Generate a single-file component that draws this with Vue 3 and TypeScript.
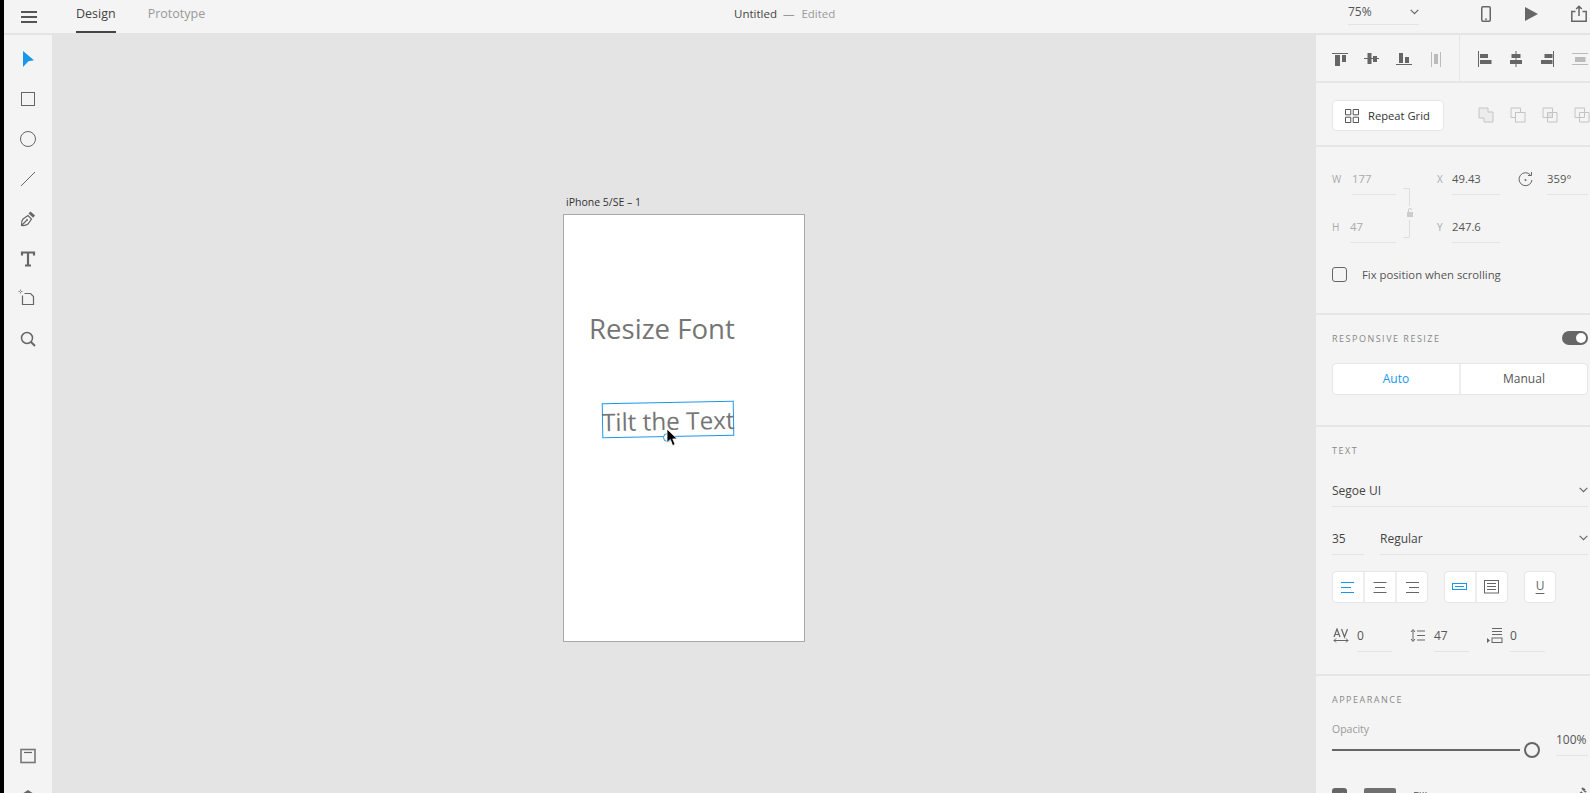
<template>
  <div class="app">
    <div class="strip" />
    <div class="main">
      <header class="topbar">
        <div class="top-left">
          <svg class="burger" width="16" height="12" viewBox="0 0 16 12"><path d="M0 1h16M0 6h16M0 11h16" stroke="#555" stroke-width="2" /></svg>
          <span class="tab active">Design</span>
          <span class="tab">Prototype</span>
        </div>
        <div class="doc-title"><span class="doc-name">Untitled</span><span class="doc-dash">—</span><span class="doc-state">Edited</span></div>
        <div class="top-right">
          <div class="zoom-box">
            <span>75%</span>
            <svg width="9" height="6" viewBox="0 0 9 6"><path d="M.7.8l3.800 3.800L8.300.8" fill="none" stroke="#666" stroke-width="1.200" /></svg>
          </div>
          <svg class="phone" width="10" height="16" viewBox="0 0 10 16"><rect x=".75" y=".75" width="8.500" height="14.500" rx="1.200" fill="none" stroke="#666" stroke-width="1.500" /><path d="M4 13.200h2" stroke="#666" stroke-width="1.300" /></svg>
          <svg class="play" width="13" height="14" viewBox="0 0 13 14"><path d="M0 0l13 7L0 14z" fill="#666" /></svg>
          <svg class="share" width="16" height="17" viewBox="0 0 16 17"><path d="M4.500 6.500H.8v9.700h14.400V6.500h-3.700M8 11V1.500M5.200 4L8 1.200 10.800 4" fill="none" stroke="#666" stroke-width="1.500" /></svg>
        </div>
      </header>

      <div class="body">
        <aside class="tools">
          <div class="tool"><svg width="20" height="20" viewBox="0 0 20 20"><path d="M5 2l11 9.200-5.500 1L5 18z" fill="#1b97ea" /></svg></div>
          <div class="tool"><svg width="20" height="20" viewBox="0 0 20 20"><rect x="3.500" y="3.500" width="13" height="13" fill="none" stroke="#666" /></svg></div>
          <div class="tool"><svg width="20" height="20" viewBox="0 0 20 20"><circle cx="10" cy="10" r="7.500" fill="none" stroke="#666" /></svg></div>
          <div class="tool"><svg width="20" height="20" viewBox="0 0 20 20"><path d="M3 17L17 3" stroke="#666" /></svg></div>
          <div class="tool"><svg width="20" height="20" viewBox="0 0 20 20"><path d="M3.500 16.500c-.3-2.500.2-5 1.500-6.500l5-3.500 3.500 3.500-3.500 5c-1.500 1.300-4 1.800-6.500 1.500zM3.500 16.500l5-5" fill="none" stroke="#666" stroke-width="1.200" /><path d="M12.500 2.500l4.500 4-1.800 2.200L10.500 4.500z" fill="#666" /><circle cx="9" cy="11" r="1" fill="#666" /></svg></div>
          <div class="tool"><svg width="20" height="20" viewBox="0 0 20 20"><path d="M4 6.500V3.500h12v3M10 3.500v13M7 16.500h6" fill="none" stroke="#666" stroke-width="2.200" /></svg></div>
          <div class="tool"><svg width="20" height="20" viewBox="0 0 20 20"><path d="M4.500 6.500v9h11V7.500l-3-3H6.500" fill="none" stroke="#666" stroke-width="1.200" /><path d="M.5 2.500h4M2.500.5v4" stroke="#888" stroke-dasharray="1.500 1" /></svg></div>
          <div class="tool"><svg width="20" height="20" viewBox="0 0 20 20"><circle cx="9" cy="9" r="5.500" fill="none" stroke="#666" stroke-width="1.500" /><path d="M13 13l4 4" stroke="#666" stroke-width="2" /></svg></div>
          <div class="tools-bottom">
            <div class="tool"><svg width="20" height="20" viewBox="0 0 20 20"><rect x="3" y="3.500" width="14" height="13" fill="none" stroke="#777" stroke-width="1.600" /><path d="M6 6.500h8" stroke="#666" stroke-width="1.200" /></svg></div>
            <div class="tool"><svg width="20" height="20" viewBox="0 0 20 20"><path d="M10 4l6 4-6 4-6-4zM4 12l6 4 6-4" fill="#666" /></svg></div>
          </div>
        </aside>

        <main class="canvas">
          <div class="artboard-label">iPhone 5/SE – 1</div>
          <div class="artboard">
            <div class="resize-text">Resize Font</div>
            <div class="tilt-box"><span>Tilt the Text</span></div>
            <div class="handle" />
            <svg class="cursor" width="13" height="19" viewBox="0 0 13 19"><path d="M1 1v13.500l3.300-3 2.300 6 2.500-1-2.300-5.600h4.500z" fill="#000" stroke="#fff" stroke-width=".8" /></svg>
          </div>
        </main>

        <aside class="panel">
          <section class="sec align-sec">
            <div class="align-group first">
              <div class="cell"><svg width="20" height="20" viewBox="0 0 20 20"><path d="M2 5.500h16" stroke="#666" /><path d="M5 7h5v11H5zM12 7h4v7h-4z" fill="#666" /></svg></div>
              <div class="cell"><svg width="20" height="20" viewBox="0 0 20 20"><path d="M2 10.500h15" stroke="#666" /><path d="M5.500 5h4v11h-4zM11 8h4v6h-4z" fill="#666" /></svg></div>
              <div class="cell"><svg width="20" height="20" viewBox="0 0 20 20"><path d="M2 16.500h16" stroke="#666" /><path d="M5 5h4v10H5zM11 9h4v6h-4z" fill="#666" /></svg></div>
              <div class="cell"><svg width="20" height="20" viewBox="0 0 20 20"><path d="M5.500 4v15M14.500 4v15" stroke="#bbb" /><path d="M8 6h4v10H8z" fill="#bbb" /></svg></div>
            </div>
            <div class="align-group">
              <div class="cell"><svg width="20" height="20" viewBox="0 0 20 20"><path d="M4.500 3v16" stroke="#666" /><path d="M6 6h8v4H6zM6 12h11.500v4H6z" fill="#666" /></svg></div>
              <div class="cell"><svg width="20" height="20" viewBox="0 0 20 20"><path d="M10 3v16" stroke="#666" /><path d="M5.500 6h9v4h-9zM4 12h12v4H4z" fill="#666" /></svg></div>
              <div class="cell"><svg width="20" height="20" viewBox="0 0 20 20"><path d="M15.500 3v16" stroke="#666" /><path d="M6.500 6h8v4h-8zM3 12h11.500v4H3z" fill="#666" /></svg></div>
              <div class="cell"><svg width="20" height="20" viewBox="0 0 20 20"><path d="M2 5.500h16M2 16.500h16" stroke="#bbb" /><path d="M5 9h10.500v5H5z" fill="#bbb" /></svg></div>
            </div>
          </section>

          <section class="sec grid-sec">
            <button class="repeat-btn">
              <svg width="14" height="14" viewBox="0 0 14 14"><path d="M.5.500h5.300v5.300H.5zM8.200.500h5.300v5.300H8.200zM.5 8.200h5.300v5.300H.5zM8.200 8.200h5.300v5.300H8.200z" fill="none" stroke="#555" /></svg>
              <span>Repeat Grid</span>
            </button>
            <div class="bools">
              <svg width="16" height="16" viewBox="0 0 16 16"><path d="M1 1h9v4h5v10H6v-4H1z" fill="#ececec" stroke="#c4c4c4" /></svg>
              <svg width="16" height="16" viewBox="0 0 16 16"><path d="M10.500 5V1H1v9.500h4.500" fill="none" stroke="#c4c4c4" /><rect x="5.500" y="5.500" width="9.500" height="9.500" fill="none" stroke="#c4c4c4" /></svg>
              <svg width="16" height="16" viewBox="0 0 16 16"><rect x="5.500" y="5.500" width="5" height="5" fill="#e4e4e4" /><path d="M1 1h9.500v9.500H1zM5.500 5.500H15V15H5.500z" fill="none" stroke="#c4c4c4" /></svg>
              <svg width="16" height="16" viewBox="0 0 16 16"><path d="M1 1h9.500v9.500H1zM5.500 5.500H15V15H5.500z" fill="none" stroke="#c4c4c4" /></svg>
            </div>
          </section>

          <section class="sec transform-sec">
            <div class="transform-grid">
              <span class="f-label">W</span>
              <span class="f-input dim">177</span>
              <svg class="bracket" width="11" height="50" viewBox="0 0 11 50"><path d="M.5.500h6v17.500M.5 49.500h6V32" fill="none" stroke="#ddd" /><path d="M4 24h6v5H4z" fill="#ccc" /><path d="M5.500 24v-2a1.500 1.500 0 013 0" fill="none" stroke="#ccc" /></svg>
              <span class="f-label">X</span>
              <span class="f-input">49.43</span>
              <svg class="rotate" width="15" height="15" viewBox="0 0 15 15"><path d="M12.500 3A6.500 6.500 0 1014 8" fill="none" stroke="#666" /><path d="M10 3.500h3.500V0" fill="none" stroke="#666" /><circle cx="7.500" cy="8" r="1" fill="#666" /></svg>
              <span class="f-input rot-input">359°</span>
              <span class="f-label h-label">H</span>
              <span class="f-input dim short">47</span>
              <span class="f-label y-label">Y</span>
              <span class="f-input y-input">247.6</span>
            </div>
            <label class="check-row">
              <span class="checkbox" />
              <span>Fix position when scrolling</span>
            </label>
          </section>

          <section class="sec resize-sec">
            <div class="sec-head">
              <span class="sec-title">RESPONSIVE RESIZE</span>
              <span class="toggle"><i /></span>
            </div>
            <div class="segment">
              <span class="seg on">Auto</span>
              <span class="seg">Manual</span>
            </div>
          </section>

          <section class="sec text-sec">
            <div class="sec-title text-title">TEXT</div>
            <div class="select full">
              <span>Segoe UI</span>
              <svg width="9" height="6" viewBox="0 0 9 6"><path d="M.7.8l3.800 3.800L8.300.8" fill="none" stroke="#666" stroke-width="1.200" /></svg>
            </div>
            <div class="font-row">
              <div class="select size">35</div>
              <div class="select weight">
                <span>Regular</span>
                <svg width="9" height="6" viewBox="0 0 9 6"><path d="M.7.8l3.800 3.800L8.300.8" fill="none" stroke="#666" stroke-width="1.200" /></svg>
              </div>
            </div>
            <div class="btn-row">
              <div class="btn-group w3">
                <span class="tbtn"><svg width="14" height="11" viewBox="0 0 14 11"><path d="M0 .5h13M0 5.500h10M0 10.500h13" stroke="#1b97ea" /></svg></span>
                <span class="tbtn"><svg width="14" height="11" viewBox="0 0 14 11"><path d="M.5 .5h13M2 5.500h10M.5 10.500h13" stroke="#666" /></svg></span>
                <span class="tbtn"><svg width="14" height="11" viewBox="0 0 14 11"><path d="M1 .5h13M4 5.500h10M1 10.500h13" stroke="#666" /></svg></span>
              </div>
              <div class="btn-group w2">
                <span class="tbtn"><svg width="16" height="8" viewBox="0 0 16 8"><rect x=".5" y=".5" width="14" height="6" fill="none" stroke="#1b97ea" /><path d="M3 3.500h9" stroke="#1b97ea" /></svg></span>
                <span class="tbtn"><svg width="16" height="14" viewBox="0 0 16 14"><rect x=".5" y=".5" width="14" height="12.500" fill="none" stroke="#666" /><path d="M3 3.500h9M3 6.500h9M3 9.500h9" stroke="#666" /></svg></span>
              </div>
              <div class="btn-group w1">
                <span class="tbtn u-btn">U</span>
              </div>
            </div>
            <div class="metric-row">
              <div class="metric">
                <span class="av"><svg width="16" height="15" viewBox="0 0 16 15"><path d="M1 12.500h14M3 10.500l-2 2 2 2M13 10.500l2 2-2 2" fill="none" stroke="#666" /><path d="M1 9l3-8 3 8M2 6.500h4M8.500 1l3 8 3-8" fill="none" stroke="#666" stroke-width="1.200" /></svg></span>
                <span class="m-input">0</span>
              </div>
              <div class="metric line">
                <span class="av"><svg width="16" height="15" viewBox="0 0 16 15"><path d="M3 2v11M1 4l2-2.500L5 4M1 11l2 2.500L5 11M7 3h8M7 7.500h8M7 12h8" fill="none" stroke="#666" /></svg></span>
                <span class="m-input">47</span>
              </div>
              <div class="metric para">
                <span class="av"><svg width="17" height="16" viewBox="0 0 17 16"><path d="M6 .5h10M6 3.500h10M6 6.500h10" stroke="#666" /><rect x="6" y="10" width="10" height="4.500" fill="none" stroke="#666" /><path d="M1 10l3 2.500L1 15z" fill="#666" /></svg></span>
                <span class="m-input">0</span>
              </div>
            </div>
          </section>

          <section class="sec look-sec">
            <div class="sec-title">APPEARANCE</div>
            <div class="opacity-row">
              <div class="opacity-left">
                <div class="opacity-label">Opacity</div>
                <div class="slider">
                  <span class="track" />
                  <span class="knob" />
                </div>
              </div>
              <span class="opacity-val">100%</span>
            </div>
            <div class="fill-row">
              <span class="fill-check"><svg width="15" height="15" viewBox="0 0 15 15"><path d="M3.500 8l3 3 5-6" fill="none" stroke="#fff" stroke-width="1.500" /></svg></span>
              <span class="swatch" />
              <span class="fill-label">Fill</span>
              <svg class="dropper" width="14" height="14" viewBox="0 0 14 14"><path d="M2 12l6-6M8 2l4 4M9.500 4.500L11 3" stroke="#666" stroke-width="2" /></svg>
            </div>
          </section>
        </aside>
      </div>
    </div>
  </div>
</template>

<script setup lang="ts">
// static mock of the editor, nothing here is interactive
</script>

<style>
html,
body {
  margin: 0;
  background: #e3e3e3;
  overflow: hidden;
}
</style>

<style scoped>
.app {
  display: flex;
  width: 1590px;
  height: 793px;
  overflow: hidden;
  background: #e4e4e4;
  font-family: "Open Sans", "Noto Sans", sans-serif;
  font-size: 11.3px;
  color: #444;
}

.strip {
  width: 4px;
  background: #000;
  flex: none;
}

.main {
  flex: 1;
  display: flex;
  flex-direction: column;
  min-width: 0;
}

.topbar {
  display: flex;
  height: 33px;
  background: #f4f4f4;
  margin-bottom: 2px;
  flex: none;
}

.top-left {
  width: 730px;
  display: flex;
  align-items: center;
  height: 33px;
}

.burger {
  margin-left: 17px;
  margin-right: 39px;
}

.tab {
  height: 33px;
  line-height: 27px;
  font-size: 12.5px;
  color: #999;
  margin-right: 32px;
  box-sizing: border-box;
}

.tab.active {
  color: #444;
  border-bottom: 2px solid #444;
}

.doc-title {
  display: flex;
  align-items: center;
  height: 27px;
  width: 260px;
  font-size: 11.5px;
}

.doc-dash {
  color: #999;
  margin: 0 7px 0 6px;
}

.doc-state {
  color: #999;
}

.top-right {
  margin-left: auto;
  display: flex;
  align-items: flex-start;
}

.zoom-box {
  width: 71px;
  height: 24px;
  line-height: 24px;
  border-bottom: 1px solid #e4e4e4;
  display: flex;
  align-items: center;
  justify-content: space-between;
  font-size: 12px;
  color: #555;
}

.phone {
  margin: 6px 0 0 62px;
}

.play {
  margin: 7px 0 0 34px;
}

.share {
  margin: 5px 3px 0 33px;
}

.body {
  flex: 1;
  display: flex;
  min-height: 0;
}

.tools {
  width: 48px;
  background: #f4f4f4;
  flex: none;
  display: flex;
  flex-direction: column;
  padding-top: 4px;
  box-sizing: border-box;
}

.tool {
  height: 40px;
  flex: none;
  display: flex;
  align-items: center;
  justify-content: center;
}

.tools-bottom {
  margin-top: auto;
  margin-bottom: -23px;
}

.canvas {
  flex: 1;
  position: relative;
}

.artboard-label {
  position: absolute;
  left: 514px;
  top: 160px;
  font-size: 10.5px;
  color: #333;
}

.artboard {
  position: absolute;
  left: 511px;
  top: 179px;
  width: 242px;
  height: 428px;
  background: #fff;
  border: 1px solid #a8a8a8;
  box-sizing: border-box;
  color: #757575;
}

.resize-text {
  position: absolute;
  left: 25px;
  top: 94px;
  font-size: 27.6px;
  line-height: 38px;
  white-space: nowrap;
}

.tilt-box {
  position: absolute;
  left: 38px;
  top: 187px;
  width: 132px;
  height: 35px;
  border: 1px solid #1b97ea;
  box-sizing: border-box;
  transform: rotate(-1deg);
  font-size: 24.3px;
  line-height: 35px;
  white-space: nowrap;
}

.tilt-box span {
  margin-left: -1px;
}

.handle {
  position: absolute;
  left: 99px;
  top: 218px;
  width: 7px;
  height: 7px;
  border: 1px solid #1b97ea;
  border-radius: 50%;
  background: #fff;
}

.cursor {
  position: absolute;
  left: 102px;
  top: 213px;
}

.panel {
  width: 274px;
  flex: none;
  background: #f4f4f4;
  overflow: hidden;
}

.sec {
  border-bottom: 2px solid #e6e6e6;
  box-sizing: border-box;
  padding: 0 2px 0 16px;
}

.align-sec {
  height: 48px;
  display: flex;
  padding-left: 8px;
  padding-right: 0;
}

.align-group {
  display: flex;
  white-space: nowrap;
}

.align-group.first {
  width: 135px;
  border-right: 1px solid #e6e6e6;
  flex: none;
}

.align-group + .align-group {
  margin-left: 8px;
}

.cell {
  width: 32px;
  height: 46px;
  flex: none;
  display: flex;
  align-items: center;
  justify-content: center;
}

.grid-sec {
  height: 64px;
  display: flex;
  align-items: flex-start;
  padding-top: 17px;
}

.repeat-btn {
  width: 112px;
  height: 31px;
  flex: none;
  display: flex;
  align-items: center;
  gap: 9px;
  padding: 0 0 0 12px;
  background: #fff;
  border: 1px solid #e6e6e6;
  border-radius: 4px;
  box-sizing: border-box;
  font: inherit;
  font-size: 11.2px;
  color: #333;
  white-space: nowrap;
}

.bools {
  display: flex;
  gap: 16px;
  margin-left: 34px;
  margin-top: 7px;
  flex: none;
}

.transform-sec {
  height: 168px;
  padding-top: 24px;
}

.transform-grid {
  display: grid;
  grid-template-columns: 20px 44px 41px 15px 48px 18px 14px 15px 41px;
  grid-template-rows: 24px 24px;
  row-gap: 24px;
}

.f-label {
  font-size: 10px;
  color: #aaa;
  line-height: 16px;
}

.f-input {
  border-bottom: 1px solid #e4e4e4;
  line-height: 16px;
  color: #555;
  height: 23px;
}

.f-input.dim {
  color: #aaa;
}

.f-input.short {
  grid-column: 2;
  grid-row: 2;
  margin-left: -2px;
}

.bracket {
  grid-column: 3;
  grid-row: 1 / span 2;
  margin: 17px 0 0 7px;
}

.rotate {
  grid-column: 7;
  grid-row: 1;
  margin-top: 1px;
}

.rot-input {
  grid-column: 9;
  grid-row: 1;
}

.f-label.h-label {
  grid-column: 1;
  grid-row: 2;
}

.f-label.y-label {
  grid-column: 4;
  grid-row: 2;
}

.y-input {
  grid-column: 5;
  grid-row: 2;
}

.check-row {
  display: flex;
  align-items: center;
  gap: 15px;
  margin-top: 24px;
  color: #555;
}

.checkbox {
  width: 15px;
  height: 15px;
  border: 1.500px solid #666;
  border-radius: 3px;
  box-sizing: border-box;
}

.resize-sec {
  height: 112px;
  padding-top: 15px;
}

.sec-head {
  display: flex;
  justify-content: space-between;
  align-items: center;
  height: 16px;
}

.sec-title {
  font-size: 9px;
  letter-spacing: 1.500px;
  color: #888;
  line-height: 14px;
  padding-top: 1px;
  margin-bottom: -1px;
}

.toggle {
  width: 26px;
  height: 14px;
  background: #666;
  border-radius: 7px;
  position: relative;
}

.toggle i {
  position: absolute;
  right: 2px;
  top: 2px;
  width: 10px;
  height: 10px;
  border-radius: 50%;
  background: #fff;
}

.segment {
  display: flex;
  height: 32px;
  margin-top: 17px;
  border: 1px solid #e6e6e6;
  border-radius: 4px;
  background: #fff;
  box-sizing: border-box;
}

.seg {
  flex: 1;
  text-align: center;
  line-height: 30px;
  color: #555;
  font-size: 12px;
}

.seg.on {
  color: #1b97ea;
  border-right: 2px solid #eee;
}

.text-sec {
  height: 249px;
  padding-top: 16px;
}

.select {
  display: flex;
  align-items: center;
  justify-content: space-between;
  border-bottom: 1px solid #e4e4e4;
  box-sizing: border-box;
  height: 31px;
  padding-bottom: 2px;
  color: #444;
  font-size: 12px;
}

.full {
  margin-top: 19px;
}

.font-row {
  display: flex;
  margin-top: 17px;
}

.size {
  width: 32px;
  flex: none;
}

.weight {
  flex: 1;
  margin-left: 16px;
}

.btn-row {
  display: flex;
  gap: 16px;
  margin-top: 16px;
}

.btn-group {
  display: flex;
  height: 32px;
  border: 1px solid #e6e6e6;
  border-radius: 4px;
  background: #fff;
  box-sizing: border-box;
  overflow: hidden;
}

.w3 {
  width: 96px;
}

.w2 {
  width: 64px;
}

.w1 {
  width: 32px;
}

.tbtn {
  flex: 1;
  display: flex;
  align-items: center;
  justify-content: center;
  border-right: 2px solid #eee;
}

.tbtn:last-child {
  border-right: 0;
}

.u-btn {
  font-size: 12px;
  color: #666;
  padding-bottom: 3px;
  text-decoration: underline;
  text-underline-offset: 3px;
}

.metric-row {
  display: flex;
  margin-top: 21px;
}

.metric {
  display: flex;
  width: 77px;
}

.metric.para {
  margin-left: -1px;
}

.av {
  width: 25px;
  padding-top: 4px;
  padding-left: 1px;
  box-sizing: border-box;
  height: 24px;
  flex: none;
}

.m-input {
  width: 35px;
  height: 28px;
  border-bottom: 1px solid #e4e4e4;
  line-height: 24px;
  box-sizing: border-box;
  font-size: 12px;
  color: #555;
}

.look-sec {
  border-bottom: 0;
  padding-top: 16px;
}

.opacity-row {
  display: flex;
  align-items: flex-end;
  margin-top: 16px;
}

.opacity-left {
  width: 224px;
  flex: none;
}

.opacity-label {
  color: #999;
  font-size: 10.5px;
  line-height: 14px;
  margin-bottom: 6px;
}

.slider {
  position: relative;
  height: 16px;
}

.track {
  position: absolute;
  left: 0;
  top: 7px;
  width: 188px;
  height: 2px;
  background: #666;
}

.knob {
  position: absolute;
  left: 192px;
  top: 0;
  width: 16px;
  height: 16px;
  border: 2px solid #666;
  border-radius: 50%;
  box-sizing: border-box;
}

.opacity-val {
  width: 32px;
  height: 24px;
  margin-bottom: 2px;
  border-bottom: 1px solid #e4e4e4;
  line-height: 18px;
  color: #555;
  font-size: 12px;
  white-space: nowrap;
}

.fill-row {
  display: flex;
  align-items: flex-start;
  margin-top: 30px;
}

.fill-check {
  width: 15px;
  height: 15px;
  background: #666;
  border-radius: 3px;
  display: block;
}

.swatch {
  width: 32px;
  height: 16px;
  background: #707070;
  border-radius: 2px;
  margin-left: 17px;
}

.fill-label {
  margin-left: 17px;
  color: #555;
}

.dropper {
  margin-left: auto;
  margin-top: -2px;
}
</style>
